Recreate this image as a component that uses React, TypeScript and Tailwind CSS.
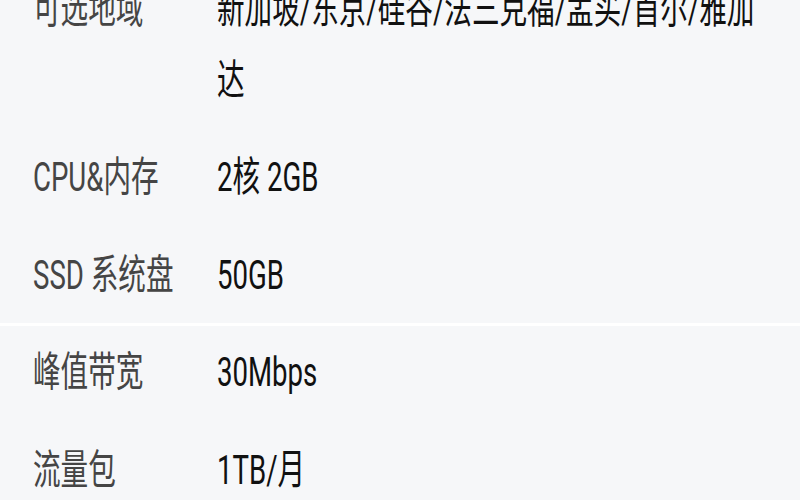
import React from "react";

const rows: { label: string; value: string; divider?: boolean }[] = [
  { label: "可选地域", value: "新加坡/东京/硅谷/法三克福/孟买/首尔/雅加达" },
  { label: "CPU&内存", value: "2核 2GB" },
  { label: "SSD 系统盘", value: "50GB", divider: true },
  { label: "峰值带宽", value: "30Mbps" },
  { label: "流量包", value: "1TB/月" },
];

export default function App() {
  return (
    <div
      className="w-[800px] h-[500px] overflow-hidden bg-[#f6f7f9]"
      style={{ fontFamily: 'Roboto, "Noto Sans CJK SC", sans-serif' }}
    >
      <div className="origin-top scale-y-[1.5]">
        <div className="-mt-[40.5px] flex flex-col">
          {rows.map((r) => (
            <div
              key={r.label}
              className={
                "flex py-[9px] text-[27.6px] leading-[47px] " +
                (r.divider ? "border-b-[2px] border-white -mb-[2px]" : "")
              }
            >
              <div className="w-[217px] shrink-0 pl-[33px] text-[#454545]">{r.label}</div>
              <div className="flex-1 pr-[30px] text-[#111111]">{r.value}</div>
            </div>
          ))}
        </div>
      </div>
    </div>
  );
}
